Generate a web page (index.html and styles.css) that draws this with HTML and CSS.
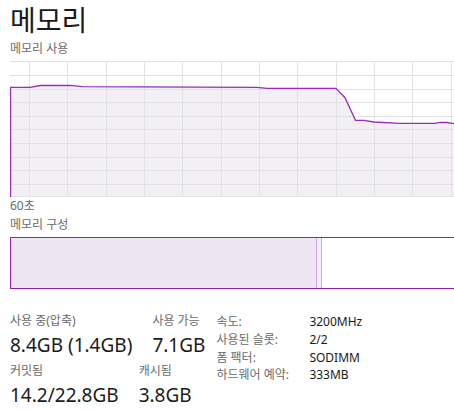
FILE: index.html
```html
<!DOCTYPE html>
<html lang="ko">
<head>
  <meta charset="UTF-8" />
  <title>메모리</title>
  <link rel="stylesheet" href="styles.css">
</head>
<body>

  <h1 class="title">메모리</h1>
  <div class="caption">메모리 사용</div>

  <div class="usage-chart">
    <svg width="446" height="136" viewBox="0 0 446 136">
      <polygon class="area" points="0.5,136 0.5,26.3 20,26.3 30,24.5 60,24.3 72,25.7 247,26.3 257,27.3 326,27.3 335,36.7 345.5,59.3 354,59.3 364,61 390,62.3 425,62.3 430,61.3 437,61.5 442,62.3 446,62.3 446,136" />
      <g class="grid">
        <line x1="0" y1="0.5" x2="446" y2="0.5" />
        <line x1="0" y1="14.5" x2="446" y2="14.5" />
        <line x1="0" y1="28.5" x2="446" y2="28.5" />
        <line x1="0" y1="41.5" x2="446" y2="41.5" />
        <line x1="0" y1="55.5" x2="446" y2="55.5" />
        <line x1="0" y1="68.5" x2="446" y2="68.5" />
        <line x1="0" y1="82.5" x2="446" y2="82.5" />
        <line x1="0" y1="96.5" x2="446" y2="96.5" />
        <line x1="0" y1="109.5" x2="446" y2="109.5" />
        <line x1="0" y1="123.5" x2="446" y2="123.5" />
        <line x1="0" y1="135.5" x2="446" y2="135.5" />
        <line x1="19.5" y1="0" x2="19.5" y2="136" />
        <line x1="57.5" y1="0" x2="57.5" y2="136" />
        <line x1="96.5" y1="0" x2="96.5" y2="136" />
        <line x1="134.5" y1="0" x2="134.5" y2="136" />
        <line x1="172.5" y1="0" x2="172.5" y2="136" />
        <line x1="211.5" y1="0" x2="211.5" y2="136" />
        <line x1="249.5" y1="0" x2="249.5" y2="136" />
        <line x1="287.5" y1="0" x2="287.5" y2="136" />
        <line x1="326.5" y1="0" x2="326.5" y2="136" />
        <line x1="364.5" y1="0" x2="364.5" y2="136" />
        <line x1="402.5" y1="0" x2="402.5" y2="136" />
        <line x1="441.5" y1="0" x2="441.5" y2="136" />
      </g>
      <polyline class="trace" points="0.5,136 0.5,26.3 20,26.3 30,24.5 60,24.3 72,25.7 247,26.3 257,27.3 326,27.3 335,36.7 345.5,59.3 354,59.3 364,61 390,62.3 425,62.3 430,61.3 437,61.5 442,62.3 446,62.3" />
    </svg>
  </div>

  <div class="caption time">60초</div>
  <div class="caption">메모리 구성</div>

  <div class="composition">
    <div class="in-use"></div>
    <div class="modified"></div>
    <div class="free"></div>
  </div>

  <div class="stats">
    <div class="stat-rows">
      <div class="stat-row">
        <div class="stat">
          <div class="stat-label">사용 중(압축)</div>
          <div class="stat-value">8.4GB (1.4GB)</div>
        </div>
        <div class="stat">
          <div class="stat-label">사용 가능</div>
          <div class="stat-value">7.1GB</div>
        </div>
      </div>
      <div class="stat-row">
        <div class="stat">
          <div class="stat-label">커밋됨</div>
          <div class="stat-value">14.2/22.8GB</div>
        </div>
        <div class="stat">
          <div class="stat-label">캐시됨</div>
          <div class="stat-value">3.8GB</div>
        </div>
      </div>
    </div>

    <div class="details">
      <span class="detail-label">속도:</span><span class="detail-value">3200MHz</span>
      <span class="detail-label">사용된 슬롯:</span><span class="detail-value">2/2</span>
      <span class="detail-label">폼 팩터:</span><span class="detail-value">SODIMM</span>
      <span class="detail-label">하드웨어 예약:</span><span class="detail-value">333MB</span>
    </div>
  </div>

</body>
</html>
```

FILE: styles.css
```css
body {
    font-family: 'Noto Sans', 'Noto Sans CJK KR', sans-serif;
    background: #ffffff;
    color: #1a1a1a;
    margin: 0;
    padding: 0 0 0 10px;
    overflow: hidden;
  }

  .title {
    font-size: 28px;
    font-weight: normal;
    line-height: 40px;
    height: 40px;
    margin: 0;
  }

  .caption {
    font-size: 12px;
    line-height: 18px;
    color: #6b6b6b;
  }

  .caption.time {
    line-height: 17px;
    margin-bottom: 2px;
  }

  .usage-chart {
    margin-top: 3px;
    height: 136px;
  }

  .usage-chart svg {
    display: block;
  }

  .grid line {
    stroke: #e2e1e3;
    stroke-width: 1;
  }

  .area {
    fill: #f2f0f4;
  }

  .trace {
    fill: none;
    stroke: #9b2bbd;
    stroke-width: 1.3;
  }

  .composition {
    display: flex;
    margin-top: 3px;
    height: 50px;
    width: 460px;
    border: 1px solid #8f20b0;
    border-right: none;
  }

  .in-use {
    width: 305px;
    background-color: #eee4f2;
    border-right: 1px solid #cfa6de;
  }

  .modified {
    width: 4px;
    background-color: #f4edf6;
    border-right: 1px solid #cfa6de;
  }

  .free {
    flex: 1;
    background-color: #ffffff;
  }

  .stats {
    display: flex;
    gap: 11px;
    margin-top: 22px;
  }

  .stat-row {
    display: flex;
    gap: 20px;
  }

  .stat-label {
    font-size: 12px;
    line-height: 20px;
    color: #6b6b6b;
  }

  .stat-value {
    font-size: 19px;
    line-height: 28px;
    margin-bottom: 2px;
  }

  .details {
    display: grid;
    grid-template-columns: 93px auto;
    font-size: 12px;
    line-height: 17.8px;
    padding-top: 2px;
    align-content: start;
  }

  .detail-label {
    color: #6b6b6b;
  }

  .detail-value {
    color: #1a1a1a;
  }
```
